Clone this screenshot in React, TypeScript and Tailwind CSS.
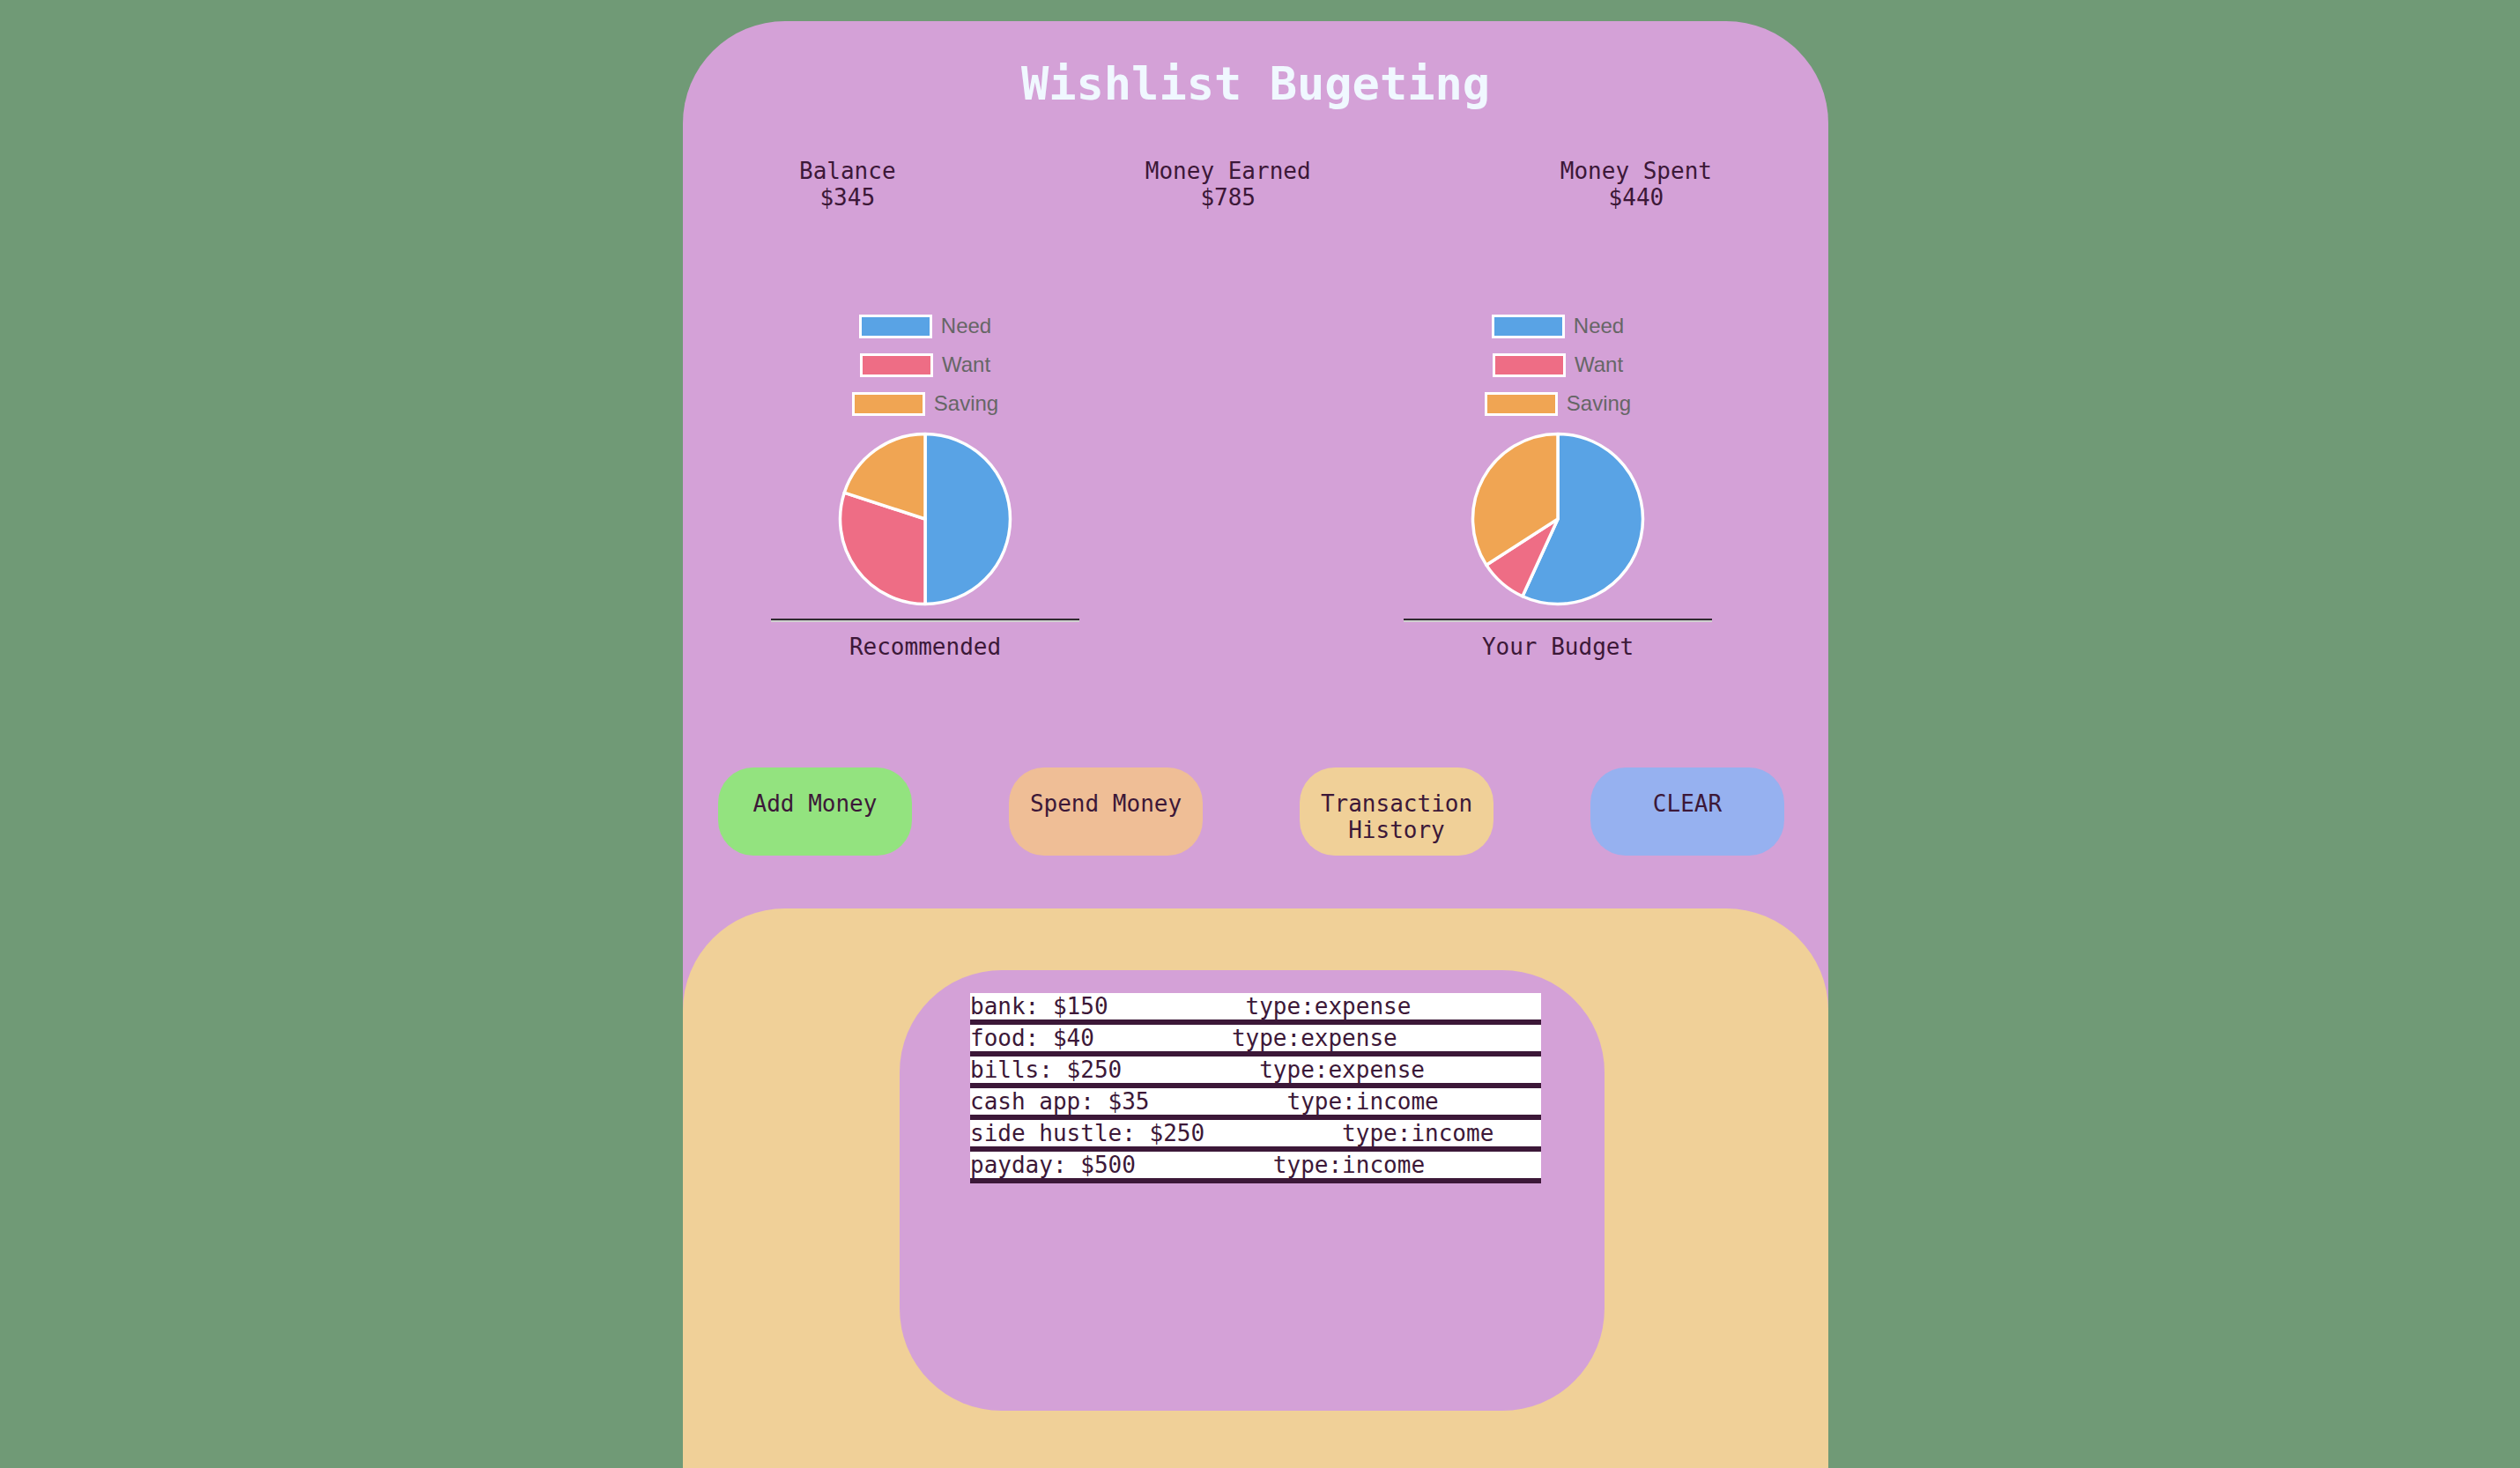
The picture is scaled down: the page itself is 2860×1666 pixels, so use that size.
import React from "react";

const MONO = { fontFamily: '"DejaVu Sans Mono", "Liberation Mono", monospace' };
const SANS = { fontFamily: '"Liberation Sans", Arial, sans-serif' };

const COLORS = ["#59a3e5", "#ee6d85", "#f0a553"];
const LABELS = ["Need", "Want", "Saving"];

function arcPath(cx: number, cy: number, r: number, a0: number, a1: number) {
  const p = (a: number) => [cx + r * Math.sin((a * Math.PI) / 180), cy - r * Math.cos((a * Math.PI) / 180)];
  const [x0, y0] = p(a0);
  const [x1, y1] = p(a1);
  const large = a1 - a0 > 180 ? 1 : 0;
  return `M${cx},${cy} L${x0},${y0} A${r},${r} 0 ${large} 1 ${x1},${y1} Z`;
}

function Pie({ data }: { data: number[] }) {
  const total = data.reduce((a, b) => a + b, 0);
  let acc = 0;
  return (
    <svg width="200" height="200" viewBox="0 0 200 200">
      {data.map((v, i) => {
        const a0 = (acc / total) * 360;
        acc += v;
        const a1 = (acc / total) * 360;
        return (
          <path
            key={i}
            d={arcPath(100, 100, 96.5, a0, a1)}
            fill={COLORS[i]}
            stroke="#ffffff"
            strokeWidth={3.5}
            strokeLinejoin="round"
          />
        );
      })}
    </svg>
  );
}

function ChartBlock({ data, label }: { data: number[]; label: string }) {
  return (
    <div className="w-[350px] flex flex-col items-center">
      <div className="flex flex-col items-center">
        {LABELS.map((l, i) => (
          <div key={l} className="h-[44px] flex items-center justify-center">
            <div className="w-[83px] h-[27px] border-[3px] border-white" style={{ backgroundColor: COLORS[i] }} />
            <span className="ml-[10px] text-[24px] text-[#666666] leading-none" style={SANS}>
              {l}
            </span>
          </div>
        ))}
      </div>
      <div className="mt-[9px]">
        <Pie data={data} />
      </div>
      <div className="mt-[13px] w-full border-t-2 border-b-2 border-t-[#2f2a2f] border-b-[#cfcfcf]" />
      <div className="mt-[13px] text-[26px] leading-[30px] text-[#3c1838]" style={MONO}>
        {label}
      </div>
    </div>
  );
}

const STATS = [
  ["Balance", "$345"],
  ["Money Earned", "$785"],
  ["Money Spent", "$440"],
];

const BUTTONS: [string, string][] = [
  ["Add Money", "bg-[#93e37f]"],
  ["Spend Money", "bg-[#efbe96]"],
  ["Transaction History", "bg-[#f0d098]"],
  ["CLEAR", "bg-[#96b1f0]"],
];

const ROWS = [
  ["bank: $150", "type:expense"],
  ["food: $40", "type:expense"],
  ["bills: $250", "type:expense"],
  ["cash app: $35", "type:income"],
  ["side hustle: $250", "type:income"],
  ["payday: $500", "type:income"],
];

export default function App() {
  return (
    <div className="w-[2860px] h-[1666px] overflow-hidden bg-[#709a76]">
      <div className="ml-[775px] mt-[24px] w-[1300px] bg-[#d4a1d7] rounded-t-[116px] pt-[41px] text-[#3c1838]" style={MONO}>
        <h1 className="text-center text-[52px] leading-[60px] font-bold text-[#f0f8ff]">Wishlist Bugeting</h1>

        <div className="mt-[54px] flex justify-between px-[132px] text-[26px] leading-[30px]">
          {STATS.map(([t, v]) => (
            <div key={t} className="text-center">
              <div>{t}</div>
              <div>{v}</div>
            </div>
          ))}
        </div>

        <div className="mt-[109px] flex pl-[100px] gap-[368px]">
          <ChartBlock data={[50, 30, 20]} label="Recommended" />
          <ChartBlock data={[250, 40, 150]} label="Your Budget" />
        </div>

        <div className="mt-[122px] flex pl-[40px] gap-[110px]">
          {BUTTONS.map(([t, c]) => (
            <div
              key={t}
              className={`w-[220px] h-[100px] rounded-[40px] pt-[26px] px-[20px] text-center text-[26px] leading-[30px] text-[#3c1838] ${c}`}
            >
              {t}
            </div>
          ))}
        </div>

        <div className="mt-[60px] h-[700px] bg-[#f0d098] rounded-t-[116px] pt-[70px]">
          <div className="ml-[246px] w-[800px] h-[500px] bg-[#d4a1d7] rounded-[116px] pt-[26px] pl-[80px]">
            <div className="w-[648px]">
              {ROWS.map(([a, b]) => (
                <div key={a} className="bg-white border-b-[6px] border-[#3c1838] text-[26px] leading-[30px] whitespace-nowrap flex">
                  <span>{a}</span>
                  <span className="ml-[156px]">{b}</span>
                </div>
              ))}
            </div>
          </div>
        </div>
      </div>
    </div>
  );
}
